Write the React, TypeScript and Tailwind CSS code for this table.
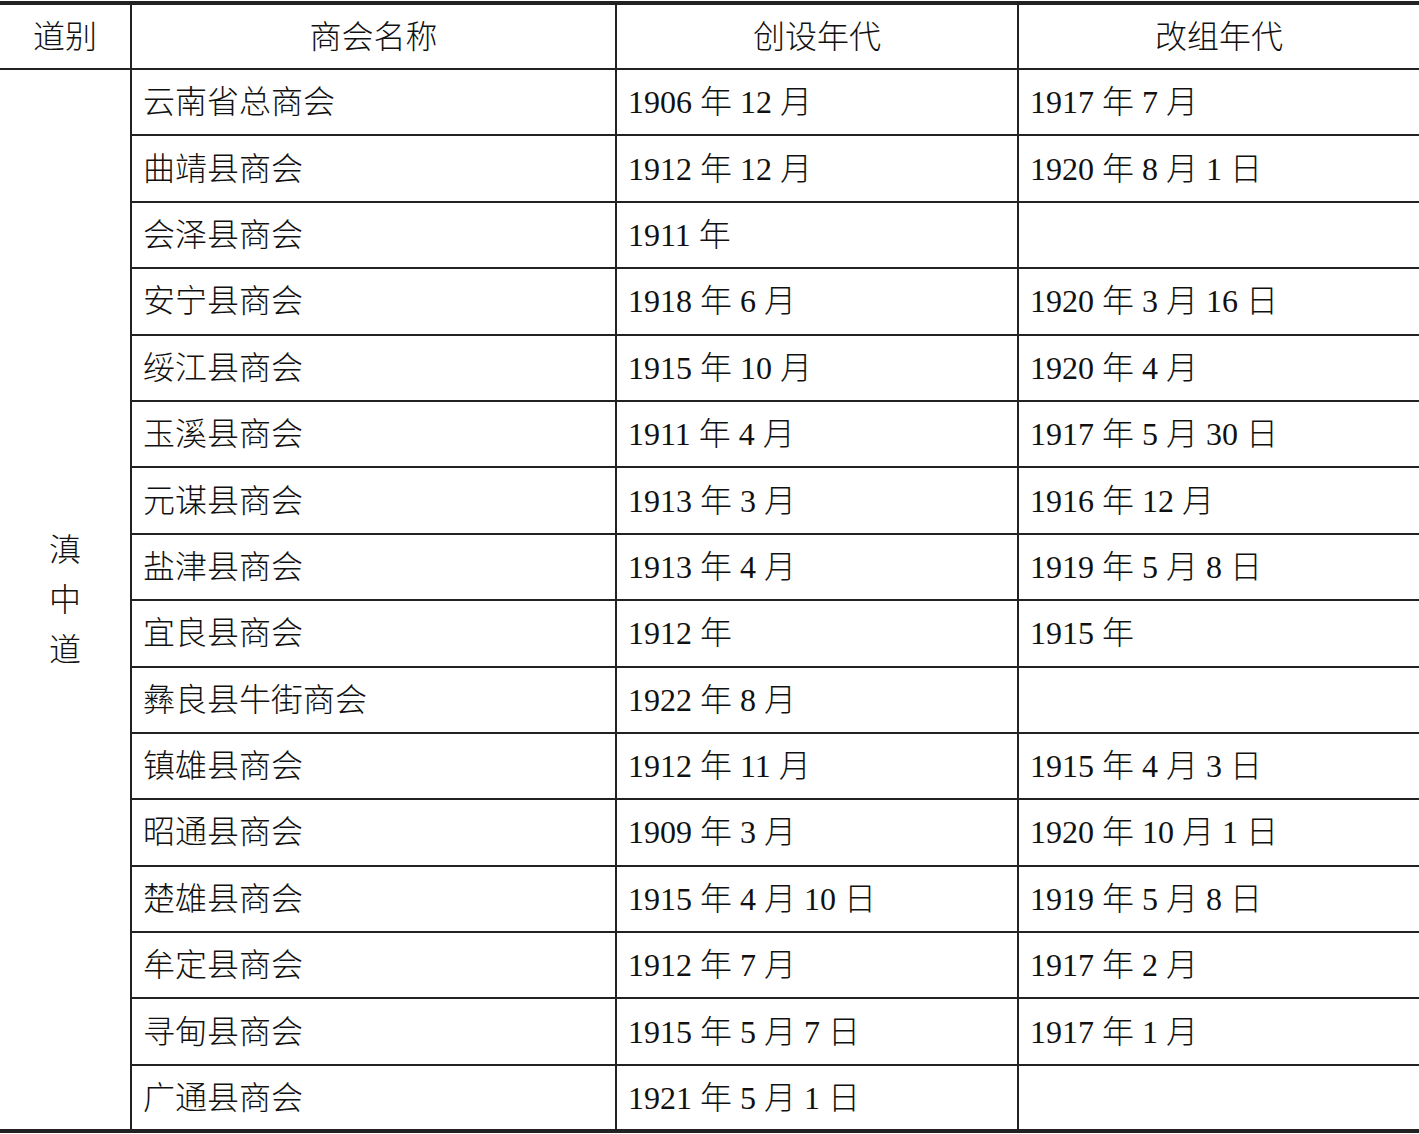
const rows: [string, string, string][] = [
  ["云南省总商会", "1906 年 12 月", "1917 年 7 月"],
  ["曲靖县商会", "1912 年 12 月", "1920 年 8 月 1 日"],
  ["会泽县商会", "1911 年", ""],
  ["安宁县商会", "1918 年 6 月", "1920 年 3 月 16 日"],
  ["绥江县商会", "1915 年 10 月", "1920 年 4 月"],
  ["玉溪县商会", "1911 年 4 月", "1917 年 5 月 30 日"],
  ["元谋县商会", "1913 年 3 月", "1916 年 12 月"],
  ["盐津县商会", "1913 年 4 月", "1919 年 5 月 8 日"],
  ["宜良县商会", "1912 年", "1915 年"],
  ["彝良县牛街商会", "1922 年 8 月", ""],
  ["镇雄县商会", "1912 年 11 月", "1915 年 4 月 3 日"],
  ["昭通县商会", "1909 年 3 月", "1920 年 10 月 1 日"],
  ["楚雄县商会", "1915 年 4 月 10 日", "1919 年 5 月 8 日"],
  ["牟定县商会", "1912 年 7 月", "1917 年 2 月"],
  ["寻甸县商会", "1915 年 5 月 7 日", "1917 年 1 月"],
  ["广通县商会", "1921 年 5 月 1 日", ""],
]

const serif = "font-['Liberation_Serif','Noto_Sans_CJK_SC',serif]"

export default function App() {
  return (
    <div className={`h-[1134px] w-[1419px] bg-white pt-px text-[#111] ${serif}`}>
      <table className={`w-full table-fixed border-collapse text-[32px] leading-none ${serif}`}>
        <colgroup>
          <col className="w-[131px]" />
          <col className="w-[485px]" />
          <col className="w-[402px]" />
          <col />
        </colgroup>
        <thead>
          <tr className="h-[66px] border-t-[4px] border-b-2 border-[#222]">
            <th className="border-r-2 border-[#222] font-light">道别</th>
            <th className="border-r-2 border-[#222] font-light">商会名称</th>
            <th className="border-r-2 border-[#222] font-light">创设年代</th>
            <th className="font-light">改组年代</th>
          </tr>
        </thead>
        <tbody className="border-b-[4px] border-[#222]">
          {rows.map(([name, founded, reorg], i) => (
            <tr key={name} className="h-[66.4px] border-b-2 border-[#222] last:border-b-0">
              {i === 0 && (
                <td rowSpan={rows.length} className="border-r-2 border-[#222] text-center align-middle font-light">
                  <div className="flex flex-col items-center gap-[18px]">
                    <span>滇</span>
                    <span>中</span>
                    <span>道</span>
                  </div>
                </td>
              )}
              <td className="border-r-2 border-[#222] pl-[11px] font-light">{name}</td>
              <td className="border-r-2 border-[#222] pl-[11px] font-light whitespace-pre">{founded}</td>
              <td className="pl-[11px] font-light whitespace-pre">{reorg}</td>
            </tr>
          ))}
        </tbody>
      </table>
    </div>
  )
}
